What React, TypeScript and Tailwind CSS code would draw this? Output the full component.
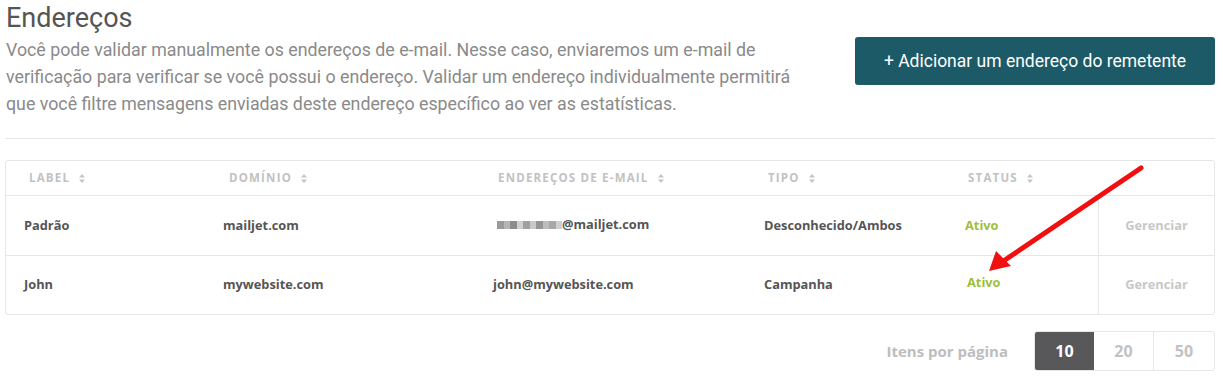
import React from "react";

const SortIcon = () => (
  <svg width="6" height="9" viewBox="0 0 6 9" className="ml-[9px] inline-block" fill="#c4c4c4">
    <path d="M3 0 L6 3.5 H0 Z" />
    <path d="M3 9 L6 5.5 H0 Z" />
  </svg>
);

const cols = [
  { t: "LABEL", p: "pl-[23px]" },
  { t: "DOMÍNIO", p: "pl-[24px]" },
  { t: "ENDEREÇOS DE E-MAIL", p: "pl-[23px]" },
  { t: "TIPO", p: "pl-[22px]" },
  { t: "STATUS", p: "pl-[21px]" },
];

const Blur = () => {
  const shades = ["#9a9a9a", "#b5b5b5", "#8c8c8c", "#d0d0d0", "#a0a0a0", "#c8c8c8", "#959595", "#bdbdbd", "#a8a8a8", "#cfcfcf"];
  return (
    <span className="inline-flex items-center">
      {shades.map((c, i) => (
        <span key={i} className="inline-block w-[6.5px] h-[8px]" style={{ backgroundColor: c }} />
      ))}
    </span>
  );
};

export default function App() {
  const grid = "grid grid-cols-[199px_270px_271px_201px_151px_116px]";
  const cell = "pl-[18px] flex items-center";
  return (
    <div className="relative w-[1223px] h-[378px] bg-white overflow-hidden" style={{ fontFamily: "Roboto, 'Liberation Sans', sans-serif" }}>
      <div className="pl-[5px] pr-[8px]">
        <div className="flex justify-between">
          <div>
            <h1 className="text-[27px] leading-[36px] text-[#555] pl-[1px]">Endereços</h1>
            <p className="text-[17.8px] leading-[27px] text-[#8a8a8a] pl-[1px]">
              Você pode validar manualmente os endereços de e-mail. Nesse caso, enviaremos um e-mail de
              <br />
              verificação para verificar se você possui o endereço. Validar um endereço individualmente permitirá
              <br />
              que você filtre mensagens enviadas deste endereço específico ao ver as estatísticas.
            </p>
          </div>
          <div className="pt-[37px]">
            <button className="w-[360px] h-[48px] rounded-[3px] bg-[#1d5a67] text-white text-[17.5px] flex items-center justify-center">
              + Adicionar um endereço do remetente
            </button>
          </div>
        </div>
        <div className="mt-[21px] h-px bg-[#e6e6e6]" />
        <div
          className="mt-[21px] border border-[#e6e6e6] rounded-[3px] font-bold"
          style={{ fontFamily: "'Open Sans', 'DejaVu Sans', sans-serif" }}
        >
          <div className={`${grid} h-[35px] text-[11.5px] tracking-[1.2px] text-[#c2c2c2] border-b border-[#e6e6e6]`}>
            {cols.map((c) => (
              <div key={c.t} className={`${c.p} flex items-center`}>
                {c.t}
                <SortIcon />
              </div>
            ))}
            <div />
          </div>
          <div className={`${grid} h-[60px] text-[12.8px] text-[#555] border-b border-[#e6e6e6]`}>
            <div className={cell}>Padrão</div>
            <div className={cell}>mailjet.com</div>
            <div className={`${cell} pl-[22px] -mt-[2px]`}>
              <Blur />
              <span>@mailjet.com</span>
            </div>
            <div className={cell}>Desconhecido/Ambos</div>
            <div className={`${cell} text-[#9dbf3c]`}>Ativo</div>
            <div className="flex items-center justify-center border-l border-[#e6e6e6] text-[#c8c8c8]">Gerenciar</div>
          </div>
          <div className={`${grid} h-[58px] text-[12.8px] text-[#555]`}>
            <div className={cell}>John</div>
            <div className={cell}>mywebsite.com</div>
            <div className={cell}>john@mywebsite.com</div>
            <div className={cell}>Campanha</div>
            <div className={`${cell} pl-[20px] text-[#9dbf3c] -mt-[4px]`}>Ativo</div>
            <div className="flex items-center justify-center border-l border-[#e6e6e6] text-[#c8c8c8]">Gerenciar</div>
          </div>
        </div>
        <div
          className="mt-[16px] flex justify-end items-center font-bold"
          style={{ fontFamily: "'Open Sans', 'DejaVu Sans', sans-serif" }}
        >
          <span className="text-[15px] text-[#bdbdbd] mr-[26px]">Itens por página</span>
          <div className="flex h-[40px] rounded-[3px] border border-[#e6e6e6] overflow-hidden text-[16px]">
            <div className="w-[59px] flex items-center justify-center bg-[#58585b] text-white">10</div>
            <div className="w-[60px] flex items-center justify-center text-[#c2c2c2] border-r border-[#e6e6e6]">20</div>
            <div className="w-[60px] flex items-center justify-center text-[#c2c2c2]">50</div>
          </div>
        </div>
      </div>
      <svg className="absolute left-0 top-0 pointer-events-none" width="1223" height="378">
        <line x1="1141" y1="168" x2="1002" y2="262" stroke="#f01010" strokeWidth="5" strokeLinecap="round" />
        <polygon points="989,271 996,251 1011,266" fill="#f01010" />
      </svg>
    </div>
  );
}
